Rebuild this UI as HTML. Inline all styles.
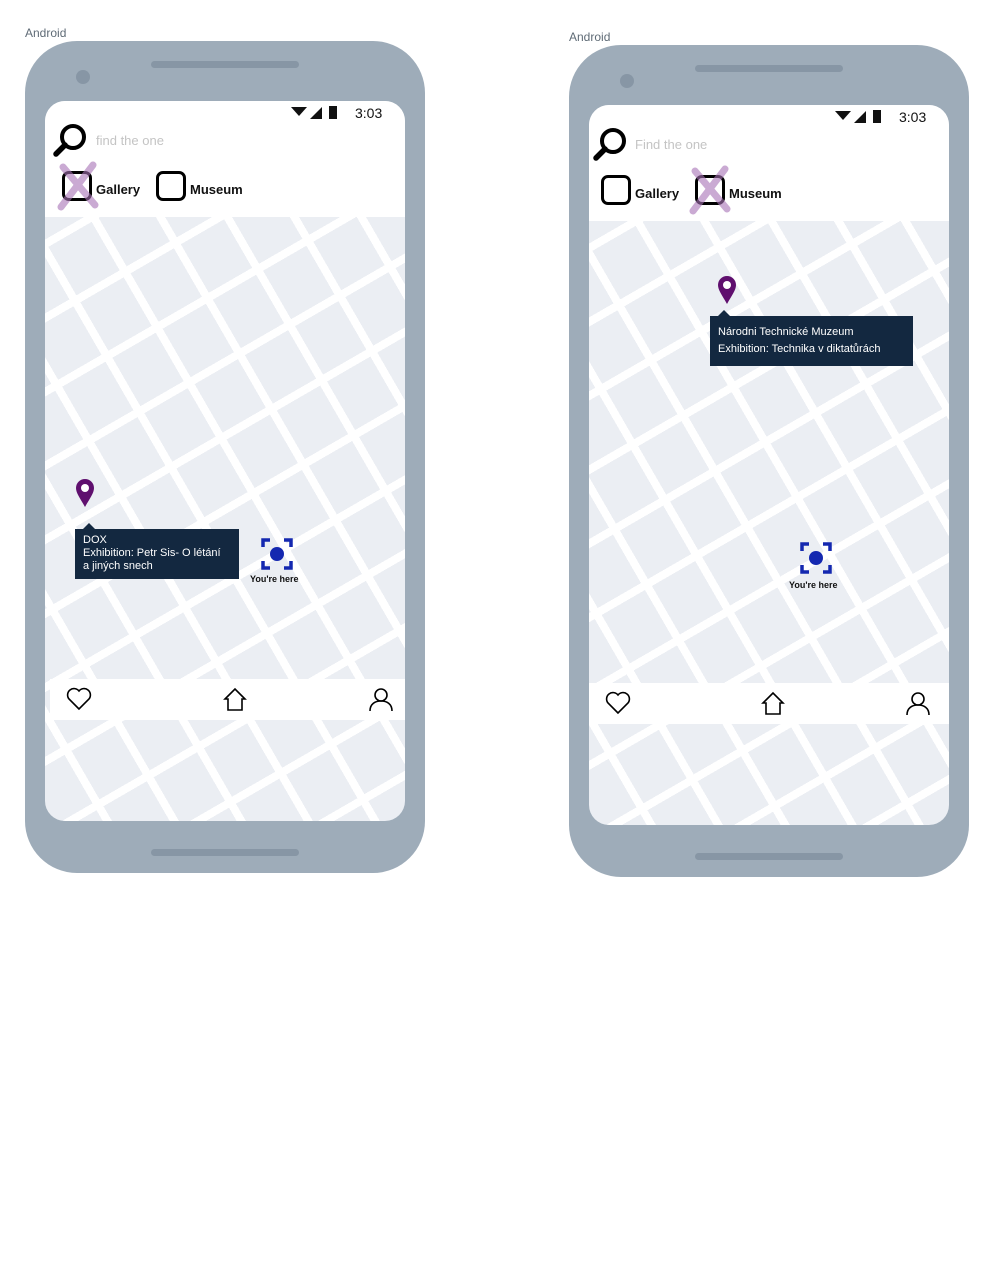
<!DOCTYPE html>
<html><head><meta charset="utf-8"><style>
*{margin:0;padding:0;box-sizing:border-box}
body{width:999px;height:1262px;background:#fff;font-family:"Liberation Sans",sans-serif;position:relative;overflow:hidden}
.lbl{position:absolute;font-size:12px;color:#5f6b76}
.phone{position:absolute;width:400px;height:832px;background:#9eacb9;border-radius:52px}
.spk{position:absolute;left:126px;top:20px;width:148px;height:7px;border-radius:4px;background:#8796a5}
.cam{position:absolute;left:51px;top:29px;width:14px;height:14px;border-radius:50%;background:#8796a5}
.bot{position:absolute;left:126px;top:808px;width:148px;height:7px;border-radius:4px;background:#8796a5}
.scr{position:absolute;left:20px;top:60px;width:360px;height:720px;border-radius:20px;overflow:hidden;background-color:#ebeef3;
background-image:repeating-linear-gradient(150deg,transparent 0 56px,#fff 56px 64px),repeating-linear-gradient(60deg,transparent 0 50px,#fff 50px 58px)}
.hdr{position:absolute;left:0;top:0;width:360px;height:116px;background:#fff}
.time{position:absolute;left:310px;top:4px;font-size:14px;color:#111}
.ph{position:absolute;left:51px;top:32px;font-size:13px;color:#c4c4c4}
.box{position:absolute;width:30px;height:30px;border:3px solid #000;border-radius:7px}
.ct{position:absolute;font-size:13px;color:#111;font-weight:bold}
.nav{position:absolute;left:5px;top:578px;width:355px;height:41px;background:#fff}
.tip{position:absolute;background:#132840;color:#fff;font-size:11px;line-height:13px;padding:5px 8px}
.tip:before{content:"";position:absolute;left:8px;top:-6px;border:6px solid transparent;border-top:0;border-bottom-color:#132840}
.yh{position:absolute;font-size:9px;color:#111;font-weight:bold}
</style></head><body>

<div class="lbl" style="left:25px;top:26px">Android</div>
<div class="lbl" style="left:569px;top:30px">Android</div>

<!-- phone 1 -->
<div class="phone" style="left:25px;top:41px">
<div class="spk"></div><div class="cam"></div><div class="bot"></div>
<div class="scr">
 <div class="hdr">
  <svg style="position:absolute;left:246px;top:5px" width="60" height="14"><path d="M0 1 L16 1 L8 10Z" fill="#111"/><path d="M19 13 L31 1 L31 13Z" fill="#111"/><rect x="38" y="0" width="8" height="13" fill="#111"/></svg>
  <div class="time">3:03</div>
  <svg style="position:absolute;left:7px;top:22px" width="36" height="36"><circle cx="21" cy="14" r="11" fill="none" stroke="#000" stroke-width="4"/><path d="M13 22 L4 31" stroke="#000" stroke-width="5.5" stroke-linecap="round"/></svg>
  <div class="ph">find the one</div>
  <div class="box" style="left:17px;top:70px"></div>
  <svg style="position:absolute;left:10px;top:60px" width="46" height="52"><path d="M8 6 L40 44 M38 4 L6 46" stroke="#a873b6" stroke-width="7" stroke-linecap="round" opacity=".6"/></svg>
  <div class="ct" style="left:51px;top:81px">Gallery</div>
  <div class="box" style="left:111px;top:70px"></div>
  <div class="ct" style="left:145px;top:81px">Museum</div>
 </div>
 <svg style="position:absolute;left:30px;top:377px" width="20" height="30"><path d="M10 29 C5 20 1 15 1 10 A9 9 0 0 1 19 10 C19 15 15 20 10 29Z" fill="#5f0f6e"/><circle cx="10" cy="10" r="4" fill="#fff"/></svg>
 <div class="tip" style="left:30px;top:428px;width:164px;height:50px">DOX<br>Exhibition: Petr Sis- O létání<br>a jiných snech</div>
 <svg style="position:absolute;left:216px;top:437px" width="32" height="32"><path d="M2 9V2H9M23 2H30V9M30 23V30H23M9 30H2V23" fill="none" stroke="#1428b0" stroke-width="3.5"/><circle cx="16" cy="16" r="7" fill="#1428b0"/></svg>
 <div class="yh" style="left:205px;top:473px">You're here</div>
 <div class="nav">
  <svg style="position:absolute;left:16px;top:8px" width="26" height="24"><path d="M13 22 L3 12 A6 6 0 0 1 13 4 A6 6 0 0 1 23 12Z" fill="none" stroke="#000" stroke-width="1.6"/></svg>
  <svg style="position:absolute;left:172px;top:8px" width="26" height="26"><path d="M3 12 L13 2 L23 12 H20 V23 H6 V12Z" fill="none" stroke="#000" stroke-width="1.6"/></svg>
  <svg style="position:absolute;left:318px;top:8px" width="26" height="26"><circle cx="13" cy="8" r="6" fill="none" stroke="#000" stroke-width="1.6"/><path d="M2 24 C2 17 7 14 13 14 C19 14 24 17 24 24" fill="none" stroke="#000" stroke-width="1.6"/></svg>
 </div>
</div>
</div>

<!-- phone 2 -->
<div class="phone" style="left:569px;top:45px">
<div class="spk"></div><div class="cam"></div><div class="bot"></div>
<div class="scr">
 <div class="hdr">
  <svg style="position:absolute;left:246px;top:5px" width="60" height="14"><path d="M0 1 L16 1 L8 10Z" fill="#111"/><path d="M19 13 L31 1 L31 13Z" fill="#111"/><rect x="38" y="0" width="8" height="13" fill="#111"/></svg>
  <div class="time">3:03</div>
  <svg style="position:absolute;left:3px;top:22px" width="36" height="36"><circle cx="21" cy="14" r="11" fill="none" stroke="#000" stroke-width="4"/><path d="M13 22 L4 31" stroke="#000" stroke-width="5.5" stroke-linecap="round"/></svg>
  <div class="ph" style="left:46px">Find the one</div>
  <div class="box" style="left:12px;top:70px"></div>
  <div class="ct" style="left:46px;top:81px">Gallery</div>
  <div class="box" style="left:106px;top:70px"></div>
  <svg style="position:absolute;left:98px;top:60px" width="46" height="52"><path d="M8 6 L40 44 M38 4 L6 46" stroke="#a873b6" stroke-width="7" stroke-linecap="round" opacity=".6"/></svg>
  <div class="ct" style="left:140px;top:81px">Museum</div>
 </div>
 <svg style="position:absolute;left:128px;top:170px" width="20" height="30"><path d="M10 29 C5 20 1 15 1 10 A9 9 0 0 1 19 10 C19 15 15 20 10 29Z" fill="#5f0f6e"/><circle cx="10" cy="10" r="4" fill="#fff"/></svg>
 <div class="tip" style="left:121px;top:211px;width:203px;height:50px;padding-top:8px;line-height:17px">Národni Technické Muzeum<br>Exhibition: Technika v diktatůrách</div>
 <svg style="position:absolute;left:211px;top:437px" width="32" height="32"><path d="M2 9V2H9M23 2H30V9M30 23V30H23M9 30H2V23" fill="none" stroke="#1428b0" stroke-width="3.5"/><circle cx="16" cy="16" r="7" fill="#1428b0"/></svg>
 <div class="yh" style="left:200px;top:475px">You're here</div>
 <div class="nav" style="left:0;width:360px">
  <svg style="position:absolute;left:16px;top:8px" width="26" height="24"><path d="M13 22 L3 12 A6 6 0 0 1 13 4 A6 6 0 0 1 23 12Z" fill="none" stroke="#000" stroke-width="1.6"/></svg>
  <svg style="position:absolute;left:171px;top:8px" width="26" height="26"><path d="M3 12 L13 2 L23 12 H20 V23 H6 V12Z" fill="none" stroke="#000" stroke-width="1.6"/></svg>
  <svg style="position:absolute;left:316px;top:8px" width="26" height="26"><circle cx="13" cy="8" r="6" fill="none" stroke="#000" stroke-width="1.6"/><path d="M2 24 C2 17 7 14 13 14 C19 14 24 17 24 24" fill="none" stroke="#000" stroke-width="1.6"/></svg>
 </div>
</div>
</div>
</body></html>
